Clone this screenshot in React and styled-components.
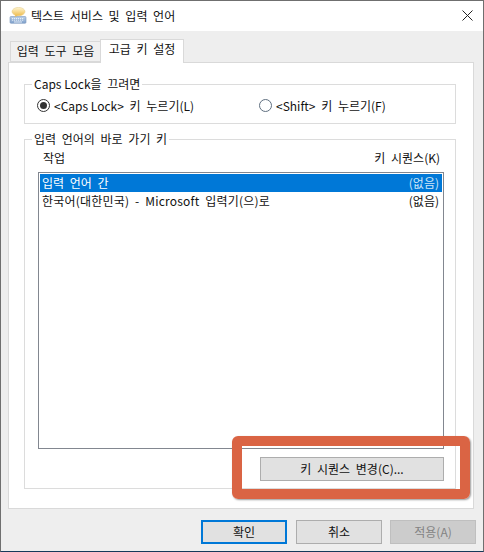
import React from "react";
import styled, { createGlobalStyle } from "styled-components";

const GlobalStyle = createGlobalStyle`
  html, body {
    margin: 0;
    padding: 0;
    background: #eeeeee;
  }
  body {
    font-family: "Noto Sans CJK KR", "Noto Sans", sans-serif;
    font-size: 12px;
    line-height: 16px;
    word-spacing: 3px;
    color: #111;
  }
`;

const Window = styled.div`
  position: relative;
  box-sizing: border-box;
  width: 484px;
  height: 552px;
  display: flex;
  flex-direction: column;
  overflow: hidden;
  background: #eeeeee;
  border: 1px solid #6f6f6f;
  border-bottom-color: #17395a;

  &::after {
    content: "";
    position: absolute;
    left: -1px;
    top: 500px;
    bottom: 0;
    width: 1px;
    background: #17395a;
  }
`;

const TitleBar = styled.div`
  flex: none;
  box-sizing: border-box;
  height: 30px;
  display: flex;
  align-items: center;
  background: #fff;
  padding: 0 10px 1px 8px;
`;

const TitleIcon = styled.svg`
  flex: none;
`;

const TitleText = styled.span`
  flex: 1;
  margin-left: 4px;
`;

const Tabs = styled.div`
  flex: none;
  display: flex;
  align-items: flex-end;
  height: 31px;
  padding-left: 9px;
`;

const Tab = styled.div`
  box-sizing: border-box;
  width: ${(p) => p.$width}px;
  height: ${(p) => (p.$active ? 24 : 21)}px;
  margin-bottom: ${(p) => (p.$active ? -1 : 0)}px;
  padding-top: 1px;
  background: ${(p) => (p.$active ? "#fff" : "#f0f0f0")};
  border: 1px solid #d9d9d9;
  border-bottom: ${(p) => (p.$active ? "none" : "1px solid #d9d9d9")};
  border-right: ${(p) => (p.$active ? "1px solid #d9d9d9" : "none")};
  text-align: center;
  position: relative;
  z-index: ${(p) => (p.$active ? 1 : 0)};
`;

const Panel = styled.div`
  flex: 1;
  margin: 0 9px 0 7px;
  padding: 13px 17px 19px 15px;
  display: flex;
  flex-direction: column;
  gap: 7px;
  background: #fff;
  border: 1px solid #d9d9d9;
`;

const Group = styled.fieldset`
  margin: 0;
  padding: 0;
  min-width: 0;
  border: 1px solid #dcdcdc;
  display: flex;
  flex-direction: column;
  flex: ${(p) => (p.$grow ? 1 : "none")};
`;

const GroupTitle = styled.legend`
  margin-left: 7px;
  padding: 0 2px;
  line-height: 16px;
`;

const LatinWords = styled.span`
  word-spacing: 0;
`;

const RadioRow = styled.div`
  display: grid;
  grid-template-columns: 222px 1fr;
  padding: 5px 0 9px 12px;
`;

const RadioLabel = styled.label`
  display: flex;
  align-items: center;
  gap: 4px;
  height: 17px;
`;

const RadioText = styled.span`
  white-space: pre;
`;

const RadioMark = styled.span`
  box-sizing: border-box;
  flex: none;
  width: 13px;
  height: 13px;
  border-radius: 50%;
  border: 1px solid ${(p) => (p.$checked ? "#333" : "#5f6f80")};
  background: #fff;
  display: flex;
  align-items: center;
  justify-content: center;

  &::before {
    content: "";
    display: ${(p) => (p.$checked ? "block" : "none")};
    width: 7px;
    height: 7px;
    border-radius: 50%;
    background: #333;
  }
`;

const GroupBody = styled.div`
  flex: 1;
  display: flex;
  flex-direction: column;
  padding: 3px 11px 7px 13px;
  min-height: 0;
`;

const ColumnHead = styled.div`
  display: flex;
  justify-content: space-between;
  padding: 0 4px 0 5px;
  height: 22px;
`;

const KeyList = styled.div`
  flex: 1;
  padding: 1px;
  background: #fff;
  border: 1px solid #828790;
`;

const KeyRow = styled.div`
  display: flex;
  justify-content: space-between;
  height: 18px;
  line-height: 18px;
  padding: 0 3px 0 2px;
  background: ${(p) => (p.$selected ? "#0078d7" : "transparent")};
  color: ${(p) => (p.$selected ? "#fff" : "#111")};
`;

const RowName = styled.span`
  letter-spacing: ${(p) => (p.$wide ? "0.2px" : "0")};
`;

const RowKeys = styled.span`
  color: ${(p) => (p.$selected ? "#cfe6f8" : "#111")};
`;

const ButtonRow = styled.div`
  display: flex;
  justify-content: flex-end;
  margin-top: 8px;
`;

const Button = styled.button`
  box-sizing: border-box;
  width: ${(p) => p.$width}px;
  height: 24px;
  padding: 0;
  font: inherit;
  word-spacing: 3px;
  color: ${(p) => (p.$disabled ? "#838383" : "#111")};
  background: ${(p) => (p.$disabled ? "#cccccc" : "#e1e1e1")};
  border: ${(p) =>
    p.$primary
      ? "2px solid #0078d7"
      : p.$disabled
      ? "1px solid #bfbfbf"
      : "1px solid #adadad"};
`;

const Footer = styled.div`
  flex: none;
  display: flex;
  justify-content: flex-end;
  gap: 9px;
  padding: 11px 7px 7px 0;
  & > button:last-child { margin-left: -1px; }
`;

const Callout = styled.div`
  position: absolute;
  left: 231px;
  top: 435px;
  width: 238px;
  height: 63px;
  box-sizing: border-box;
  border: 10px solid #da6444;
  border-radius: 6px;
  box-shadow: 1px 1px 2px rgba(0, 0, 0, 0.4);
  pointer-events: none;
`;

function KeyboardIcon() {
  return (
    <TitleIcon width="18" height="17" viewBox="0 0 18 17">
      <defs>
        <linearGradient id="bubble" x1="0" y1="0" x2="0" y2="1">
          <stop offset="0" stopColor="#fff6d2" />
          <stop offset="1" stopColor="#eebc4e" />
        </linearGradient>
        <linearGradient id="keys" x1="0" y1="0" x2="0" y2="1">
          <stop offset="0" stopColor="#b9cfe8" />
          <stop offset="1" stopColor="#7fa0cb" />
        </linearGradient>
      </defs>
      <rect x="1" y="9.5" width="16" height="6.8" rx="1" fill="url(#keys)" stroke="#7b97bd" strokeWidth="0.6" />
      <path d="M3 11.5h12M3 13.2h12" stroke="#eef4fb" strokeWidth="0.9" strokeDasharray="1.2 0.8" />
      <path d="M5 15h8" stroke="#eef4fb" strokeWidth="0.9" />
      <ellipse cx="9.5" cy="4.6" rx="6.5" ry="4.2" fill="url(#bubble)" stroke="#e2c77c" strokeWidth="0.5" />
      <path d="M6.5 8l-1 2 3.5-1.6z" fill="#eebc4e" />
    </TitleIcon>
  );
}

function CloseIcon() {
  return (
    <TitleIcon width="11" height="11" viewBox="0 0 11 11">
      <path d="M0.5 0.5l10 10M10.5 0.5l-10 10" stroke="#222" strokeWidth="1" fill="none" />
    </TitleIcon>
  );
}

export default function App() {
  return (
    <>
      <GlobalStyle />
      <Window>
        <TitleBar>
          <KeyboardIcon />
          <TitleText>텍스트 서비스 및 입력 언어</TitleText>
          <CloseIcon />
        </TitleBar>
        <Tabs>
          <Tab $width={90}>입력 도구 모음</Tab>
          <Tab $width={84} $active>고급 키 설정</Tab>
        </Tabs>
        <Panel>
          <Group>
            <GroupTitle><LatinWords>Caps Lock</LatinWords>을 끄려면</GroupTitle>
            <RadioRow>
              <RadioLabel>
                <RadioMark $checked />
                <RadioText>{"<"}<LatinWords>Caps Lock</LatinWords>{"> 키 누르기(L)"}</RadioText>
              </RadioLabel>
              <RadioLabel>
                <RadioMark />
                <RadioText>{"<Shift> 키 누르기(F)"}</RadioText>
              </RadioLabel>
            </RadioRow>
          </Group>
          <Group $grow>
            <GroupTitle>입력 언어의 바로 가기 키</GroupTitle>
            <GroupBody>
              <ColumnHead>
                <span>작업</span>
                <span>키 시퀀스(K)</span>
              </ColumnHead>
              <KeyList>
                <KeyRow $selected>
                  <RowName>입력 언어 간</RowName>
                  <RowKeys $selected>(없음)</RowKeys>
                </KeyRow>
                <KeyRow>
                  <RowName $wide>한국어(대한민국) - Microsoft 입력기(으)로</RowName>
                  <RowKeys>(없음)</RowKeys>
                </KeyRow>
              </KeyList>
              <ButtonRow>
                <Button $width={184}>키 시퀀스 변경(C)...</Button>
              </ButtonRow>
            </GroupBody>
          </Group>
        </Panel>
        <Footer>
          <Button $width={86} $primary>확인</Button>
          <Button $width={86}>취소</Button>
          <Button $width={86} $disabled>적용(A)</Button>
        </Footer>
        <Callout />
      </Window>
    </>
  );
}
